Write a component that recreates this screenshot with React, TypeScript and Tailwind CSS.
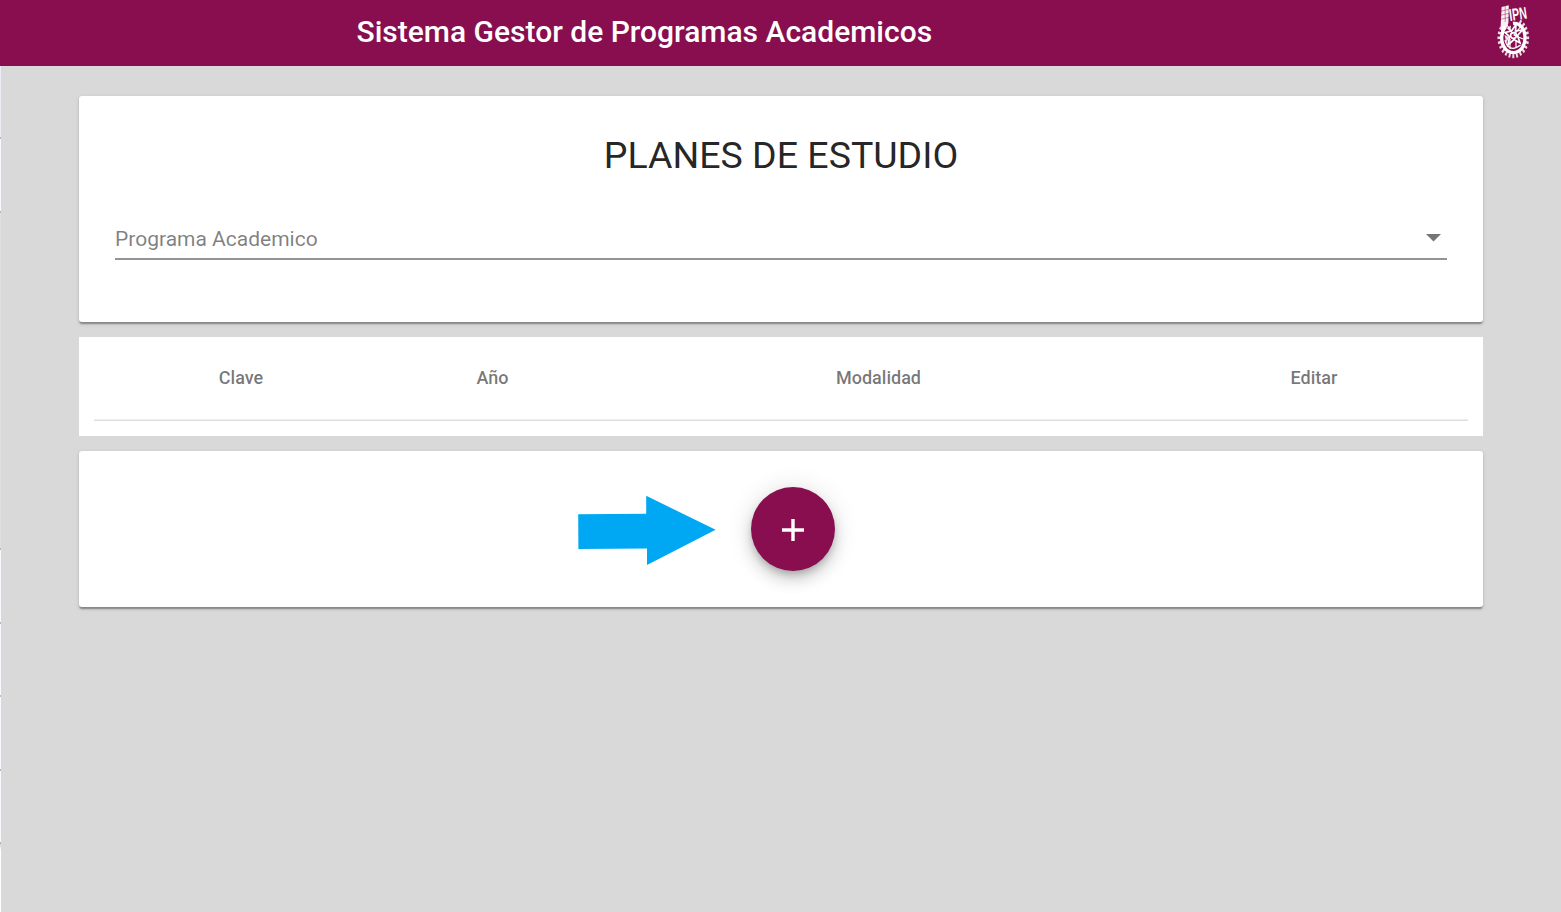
import React from "react";

const columns = [
  { label: "Clave", width: "w-[294px]" },
  { label: "Año", width: "w-[209px]" },
  { label: "Modalidad", width: "w-[563px]" },
  { label: "Editar", width: "w-[308px]" },
];

const teeth = Array.from({ length: 24 }, (_, i) => i * (360 / 24));

function Logo() {
  return (
    <svg width="34" height="58" viewBox="0 0 34 58" fill="none" aria-hidden="true">
      <g stroke="#fff" strokeWidth="2.5">
        {teeth.map((a) => (
          <path
            key={a}
            d="M0 -16V-19.8"
            transform={`translate(17.3 35.8) scale(.8 1.03) rotate(${a})`}
            opacity={a > 300 || a < 20 ? 0 : 0.85}
          />
        ))}
      </g>
      <path d="M17 21.5C24 20.5 29 27 29 35.8S24 50.6 17.3 50.6S5.6 44 5.6 35L8 24" stroke="#fff" strokeWidth="3.4" />
      <path d="M5.6 5L12.8 3.2L12.4 21L10.2 27L7 31L4.6 26Z" fill="#fff" fillOpacity=".94" />
      <path d="M5 9.2L13 7.4M5 13.2L13 11.4M5 17.2L13 15.4M9.2 4V20" stroke="#880e4f" strokeWidth=".45" />
      <path d="M20 22.5L19.5 29L26.5 28L21.5 33.5L24 41L18 37.5L12 43L13.5 34.5L9 30.5L15.5 29Z" stroke="#fff" strokeWidth="1.7" />
      <circle cx="17.5" cy="33.5" r="2.9" stroke="#fff" strokeWidth="1.7" />
      <path d="M9 38C11 46.5 17 49 24.5 43M11 23L17 32M14 47V37M25 24L18 33L27 37M20 38V46" stroke="#fff" strokeWidth="1.2" />
      <path d="M10.5 26L15 23.5L14.5 30ZM8.5 33L13 35L10.5 41Z" fill="#fff" fillOpacity=".85" />
      <text
        transform="translate(13.9 18.9) rotate(-8) scale(.62 1)"
        fill="#fff"
        fontFamily="Liberation Sans, sans-serif"
        fontWeight="700"
        fontSize="17"
        letterSpacing=".3"
      >
        IPN
      </text>
    </svg>
  );
}

function EdgeStrip() {
  return (
    <div className="flex w-px shrink-0 flex-col bg-white">
      <div className="h-[71px] bg-[#ececf5]" />
      <div className="h-[2px] bg-[#b5b5b5]" />
      <div className="h-[72px] bg-[#f8f8ff]" />
      <div className="h-[2px] bg-[#b5b5b5]" />
      <div className="h-[335px] bg-[#dfdfdf]" />
      {[0, 1, 2, 3].map((i) => (
        <React.Fragment key={i}>
          <div className="h-[2px] bg-[#b5b5b5]" />
          <div className="h-[71.5px] bg-[#f8f8ff]" />
        </React.Fragment>
      ))}
      <div className="h-[2px] bg-[#b5b5b5]" />
      <div className="h-[6px] bg-linear-to-b from-[#cfcfcf] to-white" />
    </div>
  );
}

const cardClass =
  "rounded-[3px] bg-white shadow-[0_3px_1.5px_-1.5px_rgba(0,0,0,0.2),0_1.5px_1.5px_0_rgba(0,0,0,0.14),0_1.5px_4.5px_0_rgba(0,0,0,0.12)]";

export default function App() {
  return (
    <div className="flex h-[912px] flex-col overflow-hidden bg-[#d9d9d9] font-[Roboto,sans-serif] antialiased">
      <header className="flex h-[66px] shrink-0 items-start justify-between bg-[#880e4f] pr-[31px] pl-[356.5px]">
        <h1 className="mt-[9px] text-[30px] leading-[45px] font-medium whitespace-nowrap text-white">
          Sistema Gestor de Programas Academicos
        </h1>
        <div className="mt-[2px]">
          <Logo />
        </div>
      </header>
      <div className="flex min-h-0 flex-1">
        <EdgeStrip />
        <main className="ml-[78px] flex w-[1404px] flex-col gap-[15px] pt-[30px]">
          <section className={`flex h-[226px] shrink-0 flex-col px-9 pt-[35px] ${cardClass}`}>
            <h2 className="text-center text-[37.5px] leading-[48px] text-black/87">PLANES DE ESTUDIO</h2>
            <button
              type="button"
              className="mt-[37px] flex h-[44px] items-center justify-between border-b-2 border-[#949494] pt-[4px] pr-[6px] text-left"
            >
              <span className="text-[21px] leading-[24px] text-black/50">Programa Academico</span>
              <svg width="15" height="8" viewBox="0 0 15 8" className="mb-[2px]" aria-hidden="true">
                <path d="M0 0H15L7.5 7.5Z" fill="#757575" />
              </svg>
            </button>
          </section>
          <section className="h-[99px] shrink-0 bg-white px-[15px]">
            <div className="flex h-[84px] border-b border-[#dedede] shadow-[inset_0_-1px_0_#efefef]">
              {columns.map((c) => (
                <div
                  key={c.label}
                  className={`${c.width} shrink-0 pt-[27px] text-center text-[18px] leading-[27px] font-medium text-black/54`}
                >
                  {c.label}
                </div>
              ))}
            </div>
          </section>
          <section className={`flex h-[156px] shrink-0 items-start pt-[36px] pl-[499px] ${cardClass}`}>
            <svg width="138" height="70" viewBox="0 0 138 70" className="mt-[8px]" aria-hidden="true">
              <path d="M.2 19.3L68.2 18.7V.8L137.6 34.8L69 70V53.5L.4 54Z" fill="#00a8f3" />
            </svg>
            <button
              type="button"
              aria-label="Agregar"
              className="ml-[35px] flex h-[84px] w-[84px] items-center justify-center rounded-full bg-[#880e4f] shadow-[0_4.5px_7.5px_-1.5px_rgba(0,0,0,0.2),0_9px_15px_0_rgba(0,0,0,0.14),0_1.5px_27px_0_rgba(0,0,0,0.12)]"
            >
              <svg width="22" height="22" viewBox="0 0 22 22" className="mt-[2px]" aria-hidden="true">
                <path d="M0 11H22M11 0V22" stroke="#fff" strokeWidth="3.4" />
              </svg>
            </button>
          </section>
        </main>
      </div>
    </div>
  );
}
